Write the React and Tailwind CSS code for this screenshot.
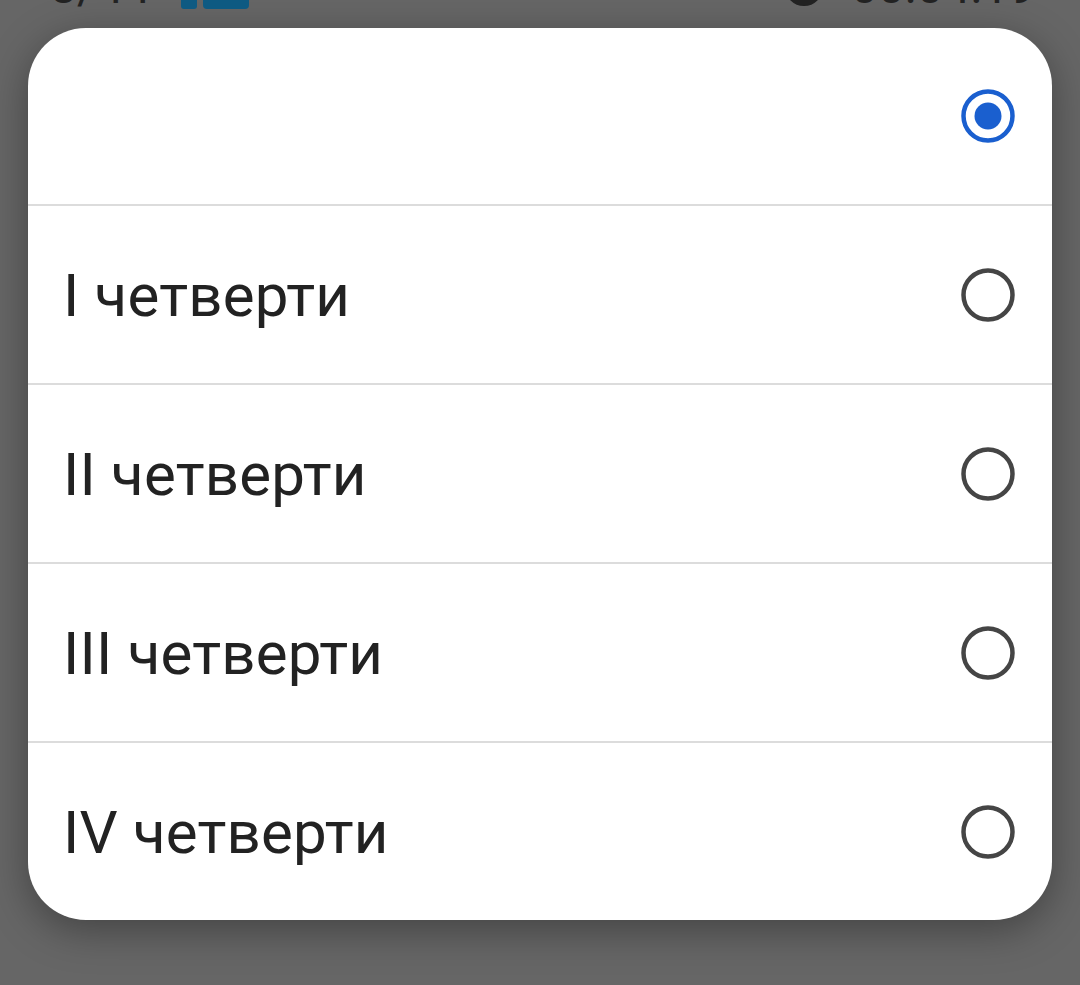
import React from "react";

const items = ["", "I четверти", "II четверти", "III четверти", "IV четверти"];
const heights = ["h-[178px]", "h-[179px]", "h-[179px]", "h-[179px]", "h-[177px]"];

function Radio({ checked }) {
  return (
    <svg width="56" height="56" viewBox="0 0 56 56">
      <circle cx="28" cy="28" r="24.5" fill="none" stroke={checked ? "#1a5fcf" : "#454545"} strokeWidth="4.5" />
      {checked && <circle cx="28" cy="28" r="13.5" fill="#1a5fcf" />}
    </svg>
  );
}

export default function App() {
  return (
    <div className="w-[1080px] h-[985px] bg-[#666666] overflow-hidden" style={{ fontFamily: "Roboto, 'Noto Sans', sans-serif" }}>
      <div className="h-[28px] overflow-hidden relative">
        <div className="flex items-center justify-between px-[50px] -mt-[38px] h-[50px] text-[48px] text-[#222] leading-none">
          <div className="flex items-center gap-[30px]">
            <span>8/44</span>
            <div className="flex items-end gap-[6px] h-[44px]">
              <div className="w-[16px] h-[30px] bg-[#0e5a82] rounded-[3px]" />
              <div className="w-[46px] h-[44px] bg-[#0e5a82] rounded-[4px]" />
            </div>
          </div>
          <div className="flex items-center gap-[28px] mr-[-6px]">
            <div className="w-[38px] h-[38px] rounded-full border-[6px] border-[#222]" />
            <span>00:04:19</span>
          </div>
        </div>
      </div>
      <div className="mx-[28px] bg-white rounded-[58px] overflow-hidden shadow-[0_10px_40px_rgba(0,0,0,0.35)]">
        {items.map((t, i) => (
          <div key={i} className={`${heights[i]} flex items-center justify-between pl-[35px] pr-[36px] ${i < items.length - 1 ? "border-b-2 border-[#dcdcdc]" : ""}`}>
            <span className="text-[60px] text-[#222222] tracking-[0.2px] pt-[2px]">{t}</span>
            <Radio checked={i === 0} />
          </div>
        ))}
      </div>
    </div>
  );
}
